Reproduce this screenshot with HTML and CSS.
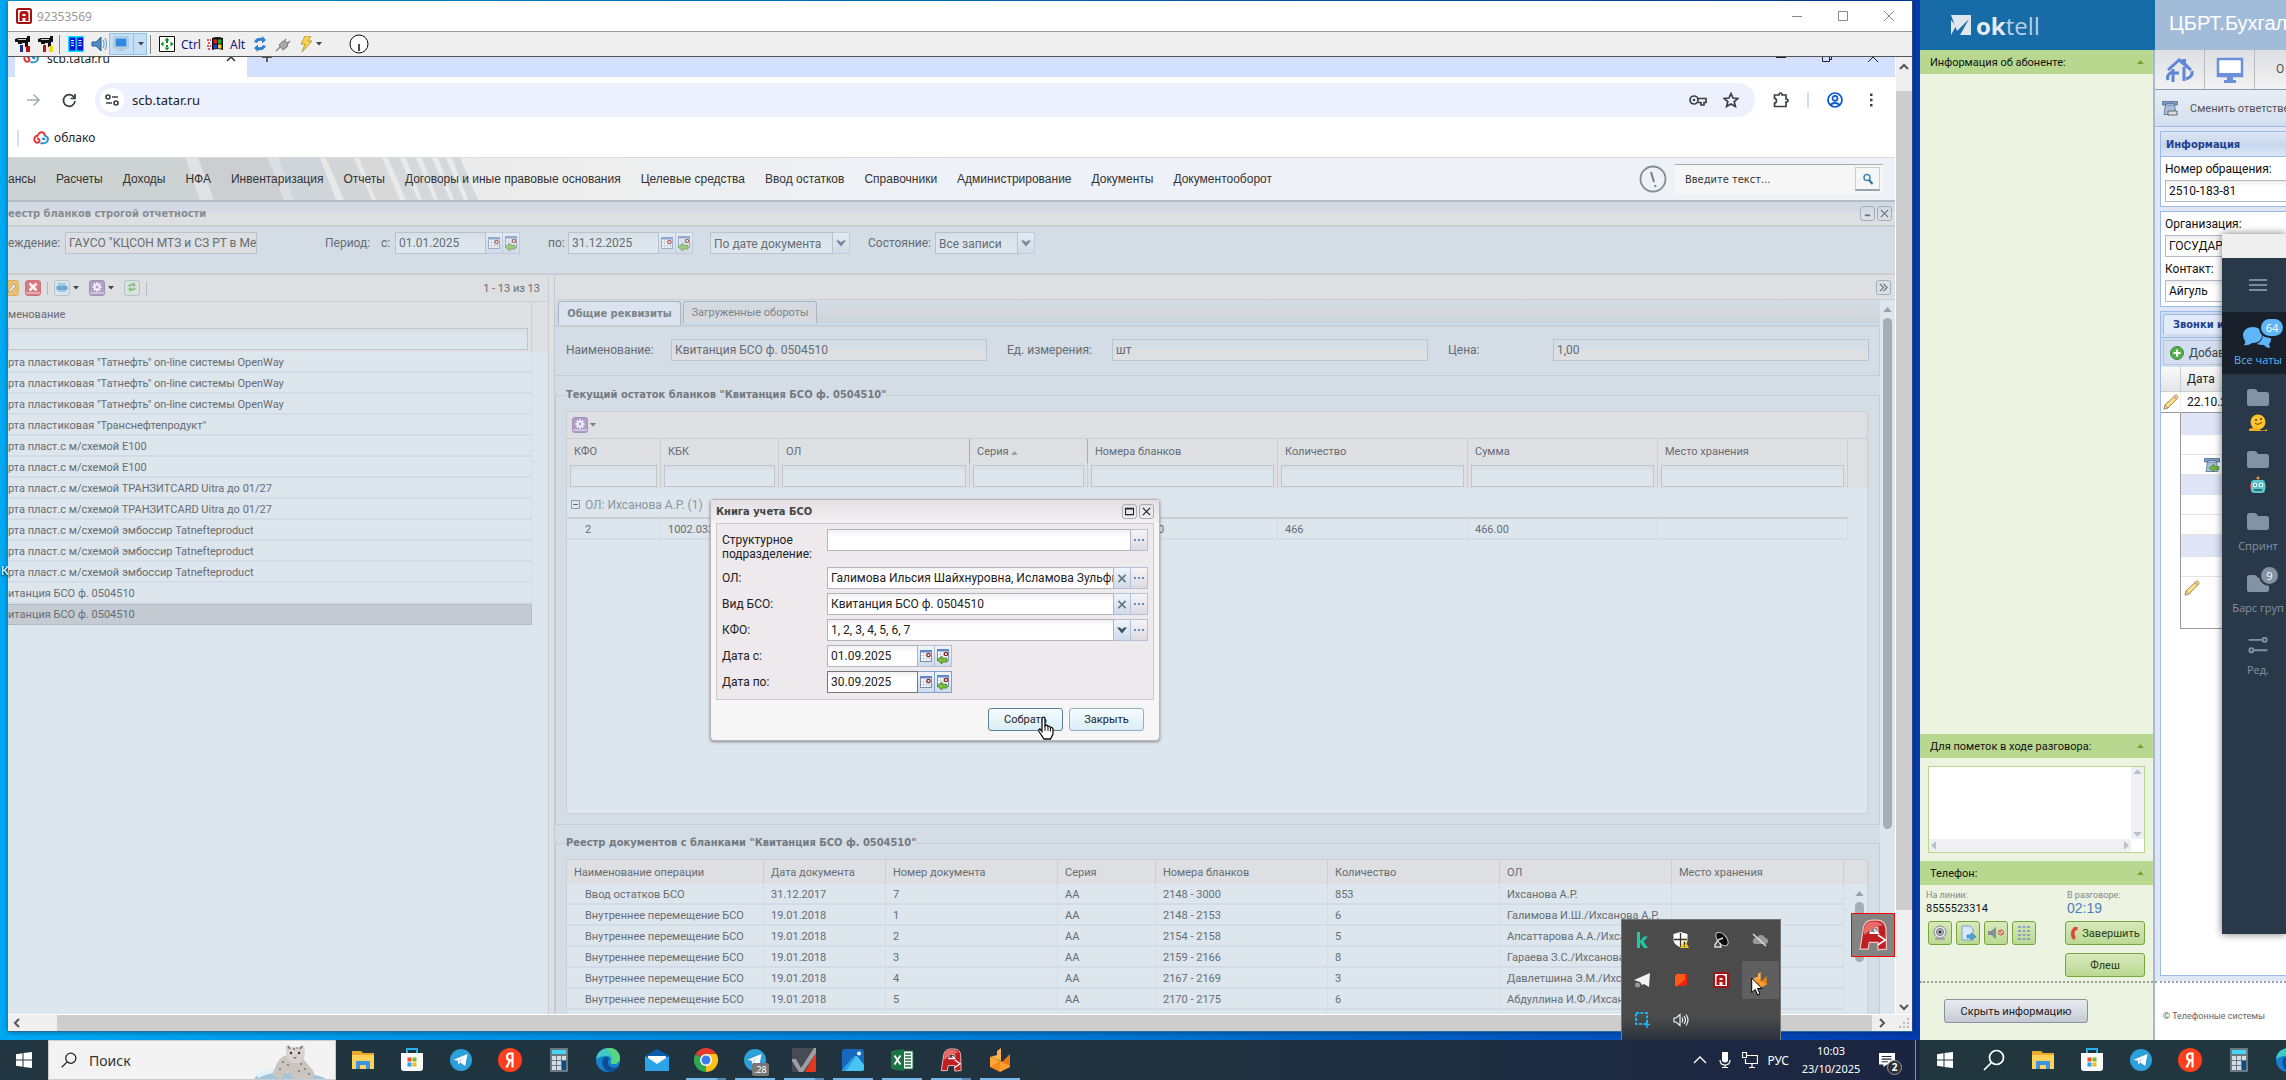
FILE: index.html
```html
<!DOCTYPE html>
<html lang="ru">
<head>
<meta charset="utf-8">
<title>92353569</title>
<link rel="stylesheet" href="styles.css">
</head>
<body>
<svg class="sprite" aria-hidden="true">
  <symbol id="cal" viewBox="0 0 14 16"><rect x="1.500" y="2.500" width="11" height="11" fill="#fff" stroke="#7d8fae"/><path d="M1 2h12v2.500H1z" fill="#6488c4"/><path d="M2 7.500h10M2 10.500h10M4.500 5v8M7.500 5v8M10.500 5v8" stroke="#cdd5e2"/><circle cx="9.500" cy="7" r="1.700" fill="#fff" stroke="#8c1d1d" stroke-width="1.200"/></symbol>
  <symbol id="calback" viewBox="0 0 14 16"><rect x="1.500" y="1.500" width="11" height="11" fill="#fff" stroke="#7d8fae"/><path d="M1 1h12v2.500H1z" fill="#6488c4"/><path d="M2 6.500h10M2 9.500h10M4.500 4v8M7.500 4v8" stroke="#cdd5e2"/><circle cx="10" cy="6" r="1.700" fill="#fff" stroke="#8c1d1d" stroke-width="1.200"/><path d="M1 12l5-4v2.500h5v3.500H6v2z" fill="#7cbf3f" stroke="#3f8420" stroke-width=".8"/></symbol>
  <symbol id="chev" viewBox="0 0 10 8"><path d="M0 1h3l2 2 2-2h3L5 7z" fill="#3c5060"/></symbol>
  <symbol id="dots" viewBox="0 0 10 4"><path d="M0 1h2v2H0zM4 1h2v2H4zM8 1h2v2H8z" fill="#5a8fc0"/></symbol>
  <symbol id="cross" viewBox="0 0 10 10"><path d="M1 1l8 8M9 1l-8 8" stroke="#5d7386" stroke-width="1.700"/></symbol>
  <symbol id="gear" viewBox="0 0 16 16"><rect x=".5" y=".5" width="15" height="15" rx="2.500" fill="#9a7db8" stroke="#8468a6"/><path d="M1 13h14" stroke="#eee5f5"/><g stroke="#fff" stroke-width="2"><path d="M8 2.500v9M3.500 7h9M4.800 3.800l6.400 6.400M11.200 3.800l-6.400 6.400"/></g><circle cx="8" cy="7" r="1.500" fill="#9a7db8"/></symbol>
  <symbol id="down" viewBox="0 0 6 4"><path d="M0 0h6L3 3.500z" fill="#444"/></symbol>
  <symbol id="up" viewBox="0 0 10 6"><path d="M0 6h10L5 0z" fill="#98a1aa"/></symbol>
  <symbol id="upgreen" viewBox="0 0 10 6"><path d="M0 6h10L5 0z" fill="#6fa632"/></symbol>
  <symbol id="cloud" viewBox="0 0 16 14"><g fill="none" stroke-width="2"><path d="M5.500 5C2 4 .500 8 2 10.500c1 1.500 3 1.500 4 .5 1-1.500 0-4-2-3.500" stroke="#e03535"/><path d="M5 4c1-3 5-4 6.500-1 .5 1 .2 1.500 0 2" stroke="#e03535"/><path d="M11.500 5c3 0 4 2.500 3 5s-5 2.500-7 2M9 8q2-1 3 1" stroke="#2a8fd0"/></g></symbol>
  <symbol id="ammyy" viewBox="0 0 16 16"><rect x="1" y="1" width="14" height="14" rx="1.500" fill="#fff" stroke="#a31212" stroke-width="2"/><path d="M3.500 13V6q0-3 3-3h3q3 0 3 3v7h-3v-3h-3v3zM6.500 6v2h3V6z" fill="#b51414" fill-rule="evenodd"/></symbol>
  <symbol id="ammyybig" viewBox="0 0 24 26"><path d="M1.500 24.500L4 8Q5 1.500 11 1h4q7 0 7.500 7l.5 16.500-7 .500v-6H9l-1 5.500zM10 7v4h6V7z" fill="#c01f22" stroke="#f0c3c3" fill-rule="evenodd"/><path d="M4.500 10q0-8 7.500-8 6 0 8 3-8 1-15 8z" fill="#e86b6b"/><path d="M9 11.500h7l-3-3M16 13l6 4-6 4" fill="none" stroke="#fff" stroke-width="1.300"/></symbol>
  <symbol id="telegram" viewBox="0 0 24 24"><circle cx="12" cy="12" r="11" fill="#2ba0da"/><path d="M4.500 11.800L18.500 6l-2.300 12-5-3.500-2 2-.4-3.700z" fill="#fff"/><path d="M9 13l7-5-5 6.500" fill="#c9dfee"/></symbol>
  <symbol id="yandex" viewBox="0 0 24 24"><circle cx="12" cy="12" r="12" fill="#fc3f1d"/><path d="M14.500 19.500V5.500h-2.300c-2 0-3.200 1.100-3.200 3.300s1.200 3.500 3.200 3.500h2.300M12 12.500l-3.500 7" fill="none" stroke="#fff" stroke-width="2.200"/></symbol>
  <symbol id="explorer" viewBox="0 0 24 24"><path d="M1 3h9l2 2h11v16H1z" fill="#e9a92c"/><path d="M1 7h22v14H1z" fill="#ffd35b"/><path d="M5 21v-8h14v8h-4v-4H9v4z" fill="#3b94e0"/></symbol>
  <symbol id="store" viewBox="0 0 24 24"><path d="M7 6V1h10v5" fill="none" stroke="#28b1ea" stroke-width="2"/><path d="M1 5h22v15q0 3-3 3H4q-3 0-3-3z" fill="#f7f9fb"/><path d="M7.500 9.500h4v4h-4z" fill="#f04f24"/><path d="M12.500 9.500h4v4h-4z" fill="#7fba28"/><path d="M7.500 14.500h4v4h-4z" fill="#1da5ea"/><path d="M12.500 14.500h4v4h-4z" fill="#fdb913"/></symbol>
  <symbol id="calc" viewBox="0 0 24 24"><rect x="3" width="18" height="24" rx="1" fill="#6b7983"/><path d="M5 2h14v4H5z" fill="#45d4f5"/><path d="M5 8h4v4H5zM10 8h4v4h-4zM15 8h4v4h-4zM5 13h4v4H5zM10 13h4v4h-4zM5 18h4v4H5zM10 18h4v4h-4z" fill="#d6dde2"/><path d="M15 13h4v9h-4z" fill="#0e4a86"/></symbol>
  <symbol id="edge" viewBox="0 0 24 24"><circle cx="12" cy="12" r="12" fill="#1680cf"/><path d="M0 11C1 3 8 0 13 0c7 0 11 5 11 10 0 4-3 6-6 6-3 0-4-1-3-3 1-3-1-5-5-5-5 0-8 2-10 3z" fill="#3fc9c6"/><path d="M14 0c6 0 10 5 10 10 0 4-3 6-6 6-3 0-4-1-3-3 3-4 1-9-6-12z" fill="#62d86b" opacity=".75"/><path d="M9 9c-5 3-3 13 5 15 4 0 7-3 8-5-5 2-10 0-10-5 0-2 1-3 1-4-1-1-3-1-4-1z" fill="#0f4c94"/></symbol>
  <symbol id="mail" viewBox="0 0 24 24"><path d="M0 8l12-7 12 7v3H0z" fill="#0b5cad"/><path d="M3 8h18v10H3z" fill="#f4f6f8"/><path d="M0 8l12 8 12-8v15H0z" fill="#2aa5ec"/><path d="M3 8h18l-9 6z" fill="#fff"/></symbol>
  <symbol id="chrome" viewBox="0 0 24 24"><path d="M12 12V0l10.400 6A12 12 0 0 1 12 24z" fill="#fbc116"/><path d="M12 12L12 24A12 12 0 0 1 1.600 6z" fill="#2da94f"/><path d="M1.600 6A12 12 0 0 1 22.400 6H12v6z" fill="#e33b2e"/><circle cx="12" cy="12" r="6" fill="#fff"/><circle cx="12" cy="12" r="4.500" fill="#3b7ded"/></symbol>
  <symbol id="check" viewBox="0 0 24 24"><path d="M0 0h24v24H0z" fill="#474b55"/><path d="M24 4v20H13z" fill="#e6361d"/><path d="M0 11h4l5 9L22 0h2v5L11 24H7L0 13z" fill="#9d9fa3"/></symbol>
  <symbol id="photos" viewBox="0 0 24 24"><rect x="1" y="1" width="22" height="22" rx="3" fill="#1769bf"/><path d="M1 23L13 9q2-2 4 0l6 8v4q0 2-2 2z" fill="#49c5f5"/><path d="M1 22l10-12q2-2 3 0L5 23H3z" fill="#2d9dea"/><circle cx="18" cy="5.500" r="2" fill="#fff"/></symbol>
  <symbol id="excel" viewBox="0 0 24 24"><path d="M12 3h11v18H12z" fill="#fff" stroke="#1c7343"/><path d="M15 6h6M15 9h6M15 12h6M15 15h6M15 18h6" stroke="#1c7343" stroke-width="1.500"/><path d="M1 3l13-2v22L1 21z" fill="#1c7343"/><path d="M4.500 7.500l6 9M10.500 7.500l-6 9" stroke="#fff" stroke-width="1.800"/></symbol>
  <symbol id="fox" viewBox="0 0 24 24"><path d="M2 9l10 4v11L2 19z" fill="#f58b1f"/><path d="M12 13l10 3v3l-10 5z" fill="#ff9d2e"/><path d="M2 9l7-2V3l4-3v13z" fill="#ffb04d"/><path d="M14 14l8-8v12z" fill="#e87a10"/><path d="M2 9l10 4-10 6z" fill="#ffa63a"/></symbol>
  <symbol id="win" viewBox="0 0 16 16"><path d="M0 2.200l6.500-.9v6.200H0zM7.500 1.100L16 0v7.500H7.500zM0 8.500h6.500v6.200L0 13.800zM7.500 8.500H16V16l-8.500-1.100z" fill="#fff"/></symbol>
  <symbol id="lens" viewBox="0 0 22 22"><circle cx="13.500" cy="8.500" r="7" fill="none" stroke="currentColor" stroke-width="1.700"/><path d="M8.500 13.500L1 21" stroke="currentColor" stroke-width="1.700"/></symbol>
  <symbol id="pencil" viewBox="0 0 16 16"><path d="M1 15l1-4L12 1.500q1.500-1 2.500.3t-.3 2.700L5 14z" fill="#f8e08a" stroke="#b08a52"/><path d="M1 15l1-4 3 3z" fill="#e9c9a8" stroke="#a9845d" stroke-width=".6"/><path d="M11 2.500l2.700 2.800" stroke="#d49a88" stroke-width="1.500"/></symbol>
  <symbol id="phone" viewBox="0 0 16 16"><path d="M.5 1.500h15V5H12V3.500H4V5H.5z" fill="#7d9cc6" stroke="#4f6c97" stroke-width=".8"/><path d="M3.500 5h9l1.500 9.500H2z" fill="#a9bedb" stroke="#4f6c97" stroke-width=".8"/></symbol>
  <symbol id="folder" viewBox="0 0 22 17"><path d="M0 2.500Q0 0 2.500 0h5q1.500 0 2.500 1.500L11 3h8.500Q22 3 22 5.500v9q0 2.500-2.500 2.500h-17Q0 17 0 14.500z" fill="#8393a3"/></symbol>
  <symbol id="drill" viewBox="0 0 16 16"><path d="M0 3l3-1h9V0h3v6h-2v5h-3V7H7v1H3V6H0z" fill="#111"/><path d="M3 3.500h8" stroke="#ccc"/></symbol>
</svg>

<div class="monitor main-monitor">
  <div class="desktop">
    <span class="peek">К</span>
    <div class="remote">
      <header class="titlebar">
        <svg class="i16"><use href="#ammyy"/></svg>
        <span class="grow">92353569</span>
        <button aria-label="Свернуть"><svg viewBox="0 0 12 12"><path d="M1 6.500h10" /></svg></button>
        <button aria-label="Развернуть"><svg viewBox="0 0 12 12"><path d="M1.500 1.500h9v9h-9z"/></svg></button>
        <button aria-label="Закрыть"><svg viewBox="0 0 12 12"><path d="M1 1l10 10M11 1L1 11"/></svg></button>
      </header>
      <div class="tools">
        <span class="tool"><svg class="i16"><use href="#drill"/><path d="M5 9h3v7H5z" fill="#1c2f8c"/><path d="M11 10h4v6h-4z" fill="#b01212"/></svg></span>
        <span class="tool"><svg class="i16"><use href="#drill"/><path d="M5 9h3v7H5z" fill="#c01212"/><path d="M11 10h4v6h-4z" fill="#f0e000"/></svg></span>
        <i class="bar"></i>
        <span class="tool"><svg class="i16" viewBox="0 0 16 16"><path d="M0 0h16v16H0z" fill="#00e1f5"/><path d="M1.500 1.500h6v13h-6zM9 1.500h6v13H9z" fill="#0617d8"/><path d="M3 4.500h3M3 7h3M3 9.500h3M10.500 4.500h3M10.500 7h3M10.500 9.500h3" stroke="#fff"/></svg></span>
        <span class="tool"><svg class="i16" viewBox="0 0 16 16"><path d="M1 6h4l5-5v14l-5-5H1z" fill="#4f8fc4" stroke="#2d5f92"/><path d="M12 4q2 4 0 8M14 2q3 6 0 12" fill="none" stroke="#7aa8cf" stroke-width="1.300"/></svg></span>
        <span class="tool on"><svg class="i16" viewBox="0 0 16 16"><path d="M1 1h14v11H1z" fill="#cfe3f7" stroke="#9fb6cc"/><path d="M2.500 2.500h11v8h-11z" fill="#2f8be0"/><path d="M6 12h4v2h2v1H4v-1h2z" fill="#b8c2cb"/></svg><i class="divide"></i><svg class="drop"><use href="#down"/></svg></span>
        <i class="bar"></i>
        <span class="tool"><svg class="i16" viewBox="0 0 16 16"><path d="M.5.500h15v15H.5z" fill="#fff" stroke="#111"/><path d="M8 1.500l2.500 3h-5zM8 14.500l2.500-3h-5zM1.500 8l3-2.500v5zM14.500 8l-3-2.500v5zM7 4h2v3H7zM7 9h2v3H7z" fill="#0a8a1c"/></svg></span>
        <span class="tool key">Ctrl</span>
        <span class="tool"><svg class="i16" viewBox="0 0 16 16"><path d="M5 2q5-2 11 0v12q-6-2-11 0z" fill="#111"/><path d="M6.500 3.500h3.500v4H6.500z" fill="#e02020"/><path d="M11 3.500h3.500v4H11z" fill="#20b030"/><path d="M6.500 8.500h3.500v4H6.500z" fill="#2040e0"/><path d="M11 8.500h3.500v4H11z" fill="#f0d020"/><path d="M0 4h4M1 7h3M0 10h4M1 13h3" stroke="#d02030" stroke-width="1.500" stroke-dasharray="2 1"/></svg></span>
        <span class="tool key">Alt</span>
        <span class="tool"><svg class="i16" viewBox="0 0 16 16"><path d="M2 6q2-5 8-4V0l4 4-4 3.500V5Q6 4 5 7z" fill="#2f7fd0"/><path d="M14 10q-2 5-8 4v2l-4-4 4-3.500V11q4 1 5-2z" fill="#2f7fd0"/></svg></span>
        <span class="tool"><svg class="i16" viewBox="0 0 16 16"><path d="M1 15l4-4" stroke="#888" stroke-width="1.500"/><path d="M4 9l4 5 4-3 1-4-5-2z" fill="#aaa" stroke="#777"/><path d="M9 6l2-3M12 8l3-3" stroke="#888" stroke-width="1.500"/></svg></span>
        <span class="tool bolt"><svg class="i16" viewBox="0 0 16 16"><path d="M7 0h6l-3 5h4L4 16l3-8H3z" fill="#fbd34b" stroke="#b08a2a" stroke-width=".8"/></svg><svg class="drop"><use href="#down"/></svg></span>
        <svg class="dial" viewBox="0 0 20 20"><circle cx="10" cy="10" r="9" fill="#fff" stroke="#111"/><path d="M10 10v7" stroke="#111" stroke-width="1.500"/></svg>
      </div>

      <div class="view">
        <div class="screen">
          <div class="tabstrip">
            <div class="tab"><svg class="i16"><use href="#cloud"/></svg><span class="grow">scb.tatar.ru</span><svg class="x10" viewBox="0 0 10 10"><path d="M1 1l8 8M9 1L1 9" stroke="#333" stroke-width="1.500"/></svg></div>
            <svg class="x10 plus" viewBox="0 0 10 10"><path d="M0 5h10M5 0v10" stroke="#333" stroke-width="1.500"/></svg>
            <div class="winbtns"><svg viewBox="0 0 12 12"><path d="M1 6.500h10"/></svg><svg viewBox="0 0 12 12"><path d="M1.500 3.500h7v7h-7zM3.500 3.500v-2h7v7h-2"/></svg><svg viewBox="0 0 12 12"><path d="M1 1l10 10M11 1L1 11"/></svg></div>
          </div>
          <div class="address">
            <svg class="ico" viewBox="0 0 16 16"><path d="M2 8h12M8.500 2.500L14 8l-5.500 5.500" stroke="#a9adb3"/></svg>
            <svg class="ico reload" viewBox="0 0 16 16"><path d="M13.200 5.500A5.800 5.800 0 1 0 14 9M14 2v4.500H9.500" stroke="#3c4043"/></svg>
            <div class="omni">
              <span class="site"><svg viewBox="0 0 14 14"><g fill="none" stroke="#3c4043" stroke-width="1.600"><circle cx="3" cy="4" r="2"/><path d="M7 4h6M1 10h6"/><circle cx="11" cy="10" r="2"/></g></svg></span>
              <input class="url" aria-label="Адрес" value="scb.tatar.ru">
              <svg class="ico keyico" viewBox="0 0 18 16"><circle cx="5" cy="8" r="4" stroke="#3c4043"/><circle cx="5" cy="8" r="1.300" fill="#3c4043"/><path d="M9 6.500h8v4h-2V13h-3v-2.500H9" stroke="#3c4043"/></svg>
              <svg class="ico" viewBox="0 0 16 16"><path d="M8 1.500l2 4.500 5 .4-3.800 3.200 1.200 4.900L8 11.900l-4.400 2.600 1.200-4.900L1 6.400 6 6z" stroke="#3c4043"/></svg>
            </div>
            <svg class="ico ext" viewBox="0 0 16 16"><path d="M1.500 3H6q0-2 1.500-2T9 3h4v4q2 0 2 1.500T13 10v4.500H1.500V11q2 0 2-2.300t-2-2.300z" stroke="#3c4043"/></svg>
            <i class="bluebar"></i>
            <svg class="ico" viewBox="0 0 16 16"><circle cx="8" cy="8" r="7" stroke="#0b57d0"/><circle cx="8" cy="6.300" r="2.500" stroke="#0b57d0"/><path d="M3 13q5-4 10 0" stroke="#0b57d0"/></svg>
            <svg class="ico more" viewBox="0 0 16 16"><path d="M7 1.500h2.500v2.500H7zM7 6.800h2.500v2.500H7zM7 12h2.500v2.500H7z" fill="#3c4043"/></svg>
          </div>
          <div class="bookmarks"><i class="bluebar"></i><svg class="i16"><use href="#cloud"/></svg><a href="#">облако</a></div>
          <nav class="menu">
            <svg class="stripes" viewBox="0 0 490 42" preserveAspectRatio="none"><path d="M0 0h178l14 42H0z" fill="#cdd3d2"/><path d="M178 0h12l16 42h-14z" fill="#dfe1e2"/><path d="M190 0h70l18 42h-72z" fill="#ccced1"/><path d="M260 0h10l16 42h-10z" fill="#dcdfe2"/><path d="M270 0h42l16 42h-42z" fill="#cfd5d9"/><path d="M318 0h28l18 42h-28z" fill="#d3d5d6"/><path d="M351 0h23l18 42h-24z" fill="#d8d8d9"/><path d="M380 0h12l18 42h-12zM398 0h10l18 42h-12zM414 0h10l18 42h-12zM430 0h8l18 42h-10zM444 0h8l18 42h-10z" fill="#d3d8dc"/></svg>
            <a href="#">ансы</a><a href="#">Расчеты</a><a href="#">Доходы</a><a href="#">НФА</a><a href="#">Инвентаризация</a><a href="#">Отчеты</a><a href="#">Договоры и иные правовые основания</a><a href="#">Целевые средства</a><a href="#">Ввод остатков</a><a href="#">Справочники</a><a href="#">Администрирование</a><a href="#">Документы</a><a href="#">Документооборот</a>
            <svg class="alert" viewBox="0 0 28 28"><circle cx="14" cy="14" r="12.500" fill="none" stroke="#858b90" stroke-width="1.800"/><path d="M12 7l3 10M16 20l.7 2" stroke="#777e84" stroke-width="2"/></svg>
            <div class="search"><input aria-label="Поиск" placeholder="Введите текст..."><button aria-label="Найти"><svg viewBox="0 0 12 12"><circle cx="5" cy="4.500" r="3" fill="#fff" stroke="#4186b8" stroke-width="1.500"/><path d="M7 7l3.500 4" stroke="#2f6f9e" stroke-width="2"/></svg></button></div>
          </nav>

          <div class="work">
            <header class="workhead"><h1>еестр бланков строгой отчетности</h1>
              <button class="mini" aria-label="Свернуть"><svg viewBox="0 0 10 10"><path d="M2 7h6" stroke-width="2"/></svg></button>
              <button class="mini" aria-label="Закрыть"><svg viewBox="0 0 10 10"><path d="M1 1l8 8M9 1L1 9"/></svg></button>
            </header>
            <form class="filters">
              <label for="org">еждение:</label><input id="org" class="f-org" value="ГАУСО &quot;КЦСОН МТЗ и СЗ РТ в Ме">
              <span class="period">Период:</span>
              <label for="from">с:</label><span class="combo f-date"><input id="from" value="01.01.2025"><i class="trg"><svg><use href="#cal"/></svg></i><i class="trg"><svg><use href="#calback"/></svg></i></span>
              <label class="f-to" for="to">по:</label><span class="combo f-date"><input id="to" value="31.12.2025"><i class="trg"><svg><use href="#cal"/></svg></i><i class="trg"><svg><use href="#calback"/></svg></i></span>
              <span class="combo f-by"><select aria-label="Сортировка"><option>По дате документа</option></select><i class="trg"><svg class="c"><use href="#chev"/></svg></i></span>
              <label class="f-state" for="st">Состояние:</label><span class="combo f-all"><select id="st"><option>Все записи</option></select><i class="trg"><svg class="c"><use href="#chev"/></svg></i></span>
            </form>
            <div class="cols">
              <aside class="list">
                <div class="ltools">
                  <svg class="i16 half" viewBox="0 0 16 16"><rect x=".5" y=".5" width="15" height="15" rx="2.500" fill="#efb13a" stroke="#d39a30"/><path d="M6 10l5-6 2 2-5 5-3 1z" fill="#fff" stroke="#8a7450" stroke-width=".8"/></svg>
                  <svg class="i16" viewBox="0 0 16 16"><rect x=".5" y=".5" width="15" height="15" rx="2.500" fill="#d6424a" stroke="#bb3b44"/><path d="M1 13h14" stroke="#f7dede"/><path d="M4.500 3.500l7 7M11.500 3.500l-7 7" stroke="#fff" stroke-width="2.500"/></svg>
                  <i class="lbar"></i>
                  <svg class="i16" viewBox="0 0 16 16"><rect x=".5" y=".5" width="15" height="15" rx="2.500" fill="#dbe7ee" stroke="#a3b5c0"/><path d="M4 3h8v3H4z" fill="#7cc0e5"/><path d="M2.500 6h11v4h-11z" fill="#2f8fc6"/><path d="M4 10h8v2H4z" fill="#7cc0e5"/></svg><svg class="drop"><use href="#down"/></svg>
                  <svg class="i16"><use href="#gear"/></svg><svg class="drop"><use href="#down"/></svg>
                  <svg class="i16" viewBox="0 0 16 16"><rect x=".5" y=".5" width="15" height="15" rx="2.500" fill="#d5e3dc" stroke="#9fb3aa"/><path d="M4 6q1-3 5-2.500V2l3 3-3 2V5.500Q6 5 5.500 7zM12 8q-1 3-5 2.500V12L4 9l3-2v1.500q3 .5 3.500-1z" fill="#5dab4b"/></svg>
                  <i class="lbar"></i>
                  <span class="count">1 - 13 из 13</span>
                </div>
                <table class="names">
                  <colgroup><col><col class="pad17"></colgroup>
                  <thead><tr><th>менование</th><th></th></tr><tr class="flt"><td><input aria-label="Фильтр наименования"></td><td></td></tr></thead>
                  <tbody>
                    <tr><td>рта пластиковая "Татнефть" on-line системы OpenWay</td></tr>
                    <tr><td>рта пластиковая "Татнефть" on-line системы OpenWay</td></tr>
                    <tr><td>рта пластиковая "Татнефть" on-line системы OpenWay</td></tr>
                    <tr><td>рта пластиковая "Транснефтепродукт"</td></tr>
                    <tr><td>рта пласт.с м/схемой Е100</td></tr>
                    <tr><td>рта пласт.с м/схемой Е100</td></tr>
                    <tr><td>рта пласт.с м/схемой ТРАНЗИТCARD Uitra до 01/27</td></tr>
                    <tr><td>рта пласт.с м/схемой ТРАНЗИТCARD Uitra до 01/27</td></tr>
                    <tr><td>рта пласт.с м/схемой эмбоссир Tatnefteproduct</td></tr>
                    <tr><td>рта пласт.с м/схемой эмбоссир Tatnefteproduct</td></tr>
                    <tr><td>рта пласт.с м/схемой эмбоссир Tatnefteproduct</td></tr>
                    <tr><td>итанция БСО ф. 0504510</td></tr>
                    <tr class="sel"><td>итанция БСО ф. 0504510</td></tr>
                  </tbody>
                </table>
              </aside>
              <section class="card">
                <div class="cardhead"><button class="mini" aria-label="Развернуть"><svg viewBox="0 0 10 10"><path d="M1 1l4 4-4 4M5 1l4 4-4 4"/></svg></button></div>
                <div class="cardbody">
                  <div class="cardcol">
                    <div class="tabs"><button class="cur">Общие реквизиты</button><button>Загруженные обороты</button></div>
                    <div class="req">
                      <label for="nm">Наименование:</label><input id="nm" value="Квитанция БСО ф. 0504510">
                      <label for="un">Ед. измерения:</label><input id="un" value="шт">
                      <label for="pr">Цена:</label><input id="pr" value="1,00">
                    </div>
                    <fieldset>
                      <legend>Текущий остаток бланков "Квитанция БСО ф. 0504510"</legend>
                      <div class="grid tall">
                        <div class="gtools"><svg class="i16"><use href="#gear"/></svg><svg class="drop"><use href="#down"/></svg></div>
                        <table class="stock">
                          <colgroup><col class="w94"><col class="w118"><col class="w191"><col class="w118"><col class="w190"><col class="w190"><col class="w190"><col class="w190"><col></colgroup>
                          <thead>
                            <tr><th>КФО</th><th>КБК</th><th class="dk">ОЛ</th><th class="dk">Серия <svg class="sort"><use href="#up"/></svg></th><th>Номера бланков</th><th>Количество</th><th>Сумма</th><th>Место хранения</th><th></th></tr>
                            <tr class="flt"><td><input aria-label="КФО"></td><td><input aria-label="КБК"></td><td class="dk"><input aria-label="ОЛ"></td><td class="dk"><input aria-label="Серия"></td><td><input aria-label="Номера"></td><td><input aria-label="Количество"></td><td><input aria-label="Сумма"></td><td><input aria-label="Место"></td><td></td></tr>
                          </thead>
                          <tbody>
                            <tr class="group"><td colspan="8"><svg class="fold" viewBox="0 0 10 10"><path d="M.5.500h9v9h-9z" fill="#dde5ed" stroke="#7f8c97"/><path d="M2.500 5h5" stroke="#4e5a64"/></svg>ОЛ: Ихсанова А.Р. (1)</td><td></td></tr>
                            <tr class="row"><td class="in">2</td><td>1002.033</td><td></td><td></td><td class="tail">0</td><td>466</td><td>466.00</td><td></td><td></td></tr>
                          </tbody>
                        </table>
                      </div>
                    </fieldset>
                    <fieldset class="docsset">
                      <legend>Реестр документов с бланками "Квитанция БСО ф. 0504510"</legend>
                      <div class="grid">
                        <table class="docs">
                          <colgroup><col class="w197"><col class="w122"><col class="w172"><col class="w98"><col class="w172"><col class="w172"><col class="w172"><col class="w172"><col></colgroup>
                          <thead><tr><th>Наименование операции</th><th>Дата документа</th><th>Номер документа</th><th>Серия</th><th>Номера бланков</th><th>Количество</th><th>ОЛ</th><th>Место хранения</th><th></th></tr></thead>
                          <tbody>
                            <tr class="row"><td class="in">Ввод остатков БСО</td><td>31.12.2017</td><td>7</td><td>АА</td><td>2148 - 3000</td><td>853</td><td>Ихсанова А.Р.</td><td></td><td></td></tr>
                            <tr class="row"><td class="in">Внутреннее перемещение БСО</td><td>19.01.2018</td><td>1</td><td>АА</td><td>2148 - 2153</td><td>6</td><td>Галимова И.Ш./Ихсанова А.Р.</td><td></td><td></td></tr>
                            <tr class="row"><td class="in">Внутреннее перемещение БСО</td><td>19.01.2018</td><td>2</td><td>АА</td><td>2154 - 2158</td><td>5</td><td>Апсаттарова А.А./Ихсанова</td><td></td><td></td></tr>
                            <tr class="row"><td class="in">Внутреннее перемещение БСО</td><td>19.01.2018</td><td>3</td><td>АА</td><td>2159 - 2166</td><td>8</td><td>Гараева З.С./Ихсанова</td><td></td><td></td></tr>
                            <tr class="row"><td class="in">Внутреннее перемещение БСО</td><td>19.01.2018</td><td>4</td><td>АА</td><td>2167 - 2169</td><td>3</td><td>Давлетшина Э.М./Ихсанова</td><td></td><td></td></tr>
                            <tr class="row"><td class="in">Внутреннее перемещение БСО</td><td>19.01.2018</td><td>5</td><td>АА</td><td>2170 - 2175</td><td>6</td><td>Абдуллина И.Ф./Ихсанова</td><td></td><td></td></tr>
                            <tr class="row"><td></td><td></td><td></td><td></td><td></td><td></td><td></td><td></td><td></td></tr>
                          </tbody>
                        </table>
                        <div class="innerbar"><svg><use href="#up"/></svg><i></i></div>
                      </div>
                    </fieldset>
                  </div>
                  <div class="cardbar"><svg><use href="#up"/></svg><i></i></div>
                </div>
              </section>
            </div>
          </div>
        </div>
        <div class="vbar"><svg viewBox="0 0 10 10"><path d="M1 7l4-4 4 4"/></svg><i></i><svg viewBox="0 0 10 10"><path d="M1 3l4 4 4-4"/></svg></div>
      </div>
      <div class="hbar"><svg viewBox="0 0 10 10"><path d="M7 1L3 5l4 4"/></svg><i></i><svg viewBox="0 0 10 10"><path d="M3 1l4 4-4 4"/></svg><svg class="grip" viewBox="0 0 10 10"><path d="M8 0h2v2H8zM4 4h2v2H4zM8 4h2v2H8zM0 8h2v2H0zM4 8h2v2H4zM8 8h2v2H8z"/></svg></div>
    </div>
  </div>

  <div class="dialog" role="dialog" aria-label="Книга учета БСО">
    <header><h2>Книга учета БСО</h2>
      <button class="mini" aria-label="Развернуть"><svg viewBox="0 0 10 10"><path d="M.5 1.500h9v7h-9zM1 2h8"/></svg></button>
      <button class="mini" aria-label="Закрыть окно"><svg viewBox="0 0 10 10"><path d="M1 1l8 8M9 1L1 9"/></svg></button>
    </header>
    <form class="dform">
      <div class="frow two"><label for="d1">Структурное подразделение:</label><span class="combo"><input id="d1"><i class="trg g"><svg class="d"><use href="#dots"/></svg></i></span></div>
      <div class="frow"><label for="d2">ОЛ:</label><span class="combo"><input id="d2" value="Галимова Ильсия Шайхнуровна, Исламова Зульфи"><i class="trg"><svg class="c"><use href="#cross"/></svg></i><i class="trg g"><svg class="d"><use href="#dots"/></svg></i></span></div>
      <div class="frow"><label for="d3">Вид БСО:</label><span class="combo"><input id="d3" value="Квитанция БСО ф. 0504510"><i class="trg"><svg class="c"><use href="#cross"/></svg></i><i class="trg g"><svg class="d"><use href="#dots"/></svg></i></span></div>
      <div class="frow"><label for="d4">КФО:</label><span class="combo"><input id="d4" value="1, 2, 3, 4, 5, 6, 7"><i class="trg"><svg class="c"><use href="#chev"/></svg></i><i class="trg g"><svg class="d"><use href="#dots"/></svg></i></span></div>
      <div class="frow"><label for="d5">Дата с:</label><span class="combo date"><input id="d5" value="01.09.2025"><i class="trg"><svg><use href="#cal"/></svg></i><i class="trg"><svg><use href="#calback"/></svg></i></span></div>
      <div class="frow"><label for="d6">Дата по:</label><span class="combo date focus"><input id="d6" value="30.09.2025"><i class="trg"><svg><use href="#cal"/></svg></i><i class="trg"><svg><use href="#calback"/></svg></i></span></div>
    </form>
    <footer><button class="hot">Собрать</button><button>Закрыть</button></footer>
    <svg class="hand" viewBox="0 0 18 24"><path d="M5.500 1.500q1.500-1 2.500.5v8l1-1q1.500 0 2 1.500 1.500-1 2.500 1 2-.5 2.500 1.500v5L13.500 23H7L2 15.500q-1-2 1-2.500l2 2.500V2z" fill="#fff" stroke="#111" stroke-width="1.300"/><path d="M11 11v4M13.500 12v3.500M8 10v5" stroke="#111"/></svg>
  </div>

  <div class="float"><svg viewBox="0 0 24 26"><use href="#ammyybig"/></svg></div>

  <div class="tray-popup">
    <span><svg viewBox="0 0 16 16"><path d="M3 0h3v9l4-4.500h4L9.500 9.500 14 16h-4l-4-5.500V16H3z" fill="#1fc8a0"/></svg></span>
    <span><svg viewBox="0 0 16 16"><path d="M7.500 0l7 2v6q0 4-7 7.500Q.5 12 .5 8V2z" fill="#fff"/><path d="M7.500 1v14M1 7.500h13" stroke="#333" stroke-width="1.300"/><path d="M11.500 7.500L16 16H7z" fill="#f5c518"/><path d="M11.500 10v3M11.500 14v1" stroke="#222"/></svg></span>
    <span><svg viewBox="0 0 16 16"><ellipse cx="9" cy="7" rx="4.500" ry="8" fill="#0a0a0a" stroke="#ccc" transform="rotate(-40 9 7)"/><path d="M5 8l-3 5v2h6l-1-4M5 8l5-2" fill="none" stroke="#ddd" stroke-width="1.500"/></svg></span>
    <span><svg viewBox="0 0 16 16"><path d="M3 12q-3-1-2-4t4-2q1-3 4-3t4 3q3 0 3 3t-3 3z" fill="#9a9a9a"/><path d="M1 2l13 12" stroke="#ddd" stroke-width="1.500"/></svg></span>
    <span><svg viewBox="0 0 16 16"><path d="M0 8L16 1l-1 14-5-3-2 1-2-3z" fill="#f2f2f2"/><circle cx="3.500" cy="13" r="2.500" fill="#999"/></svg></span>
    <span><svg viewBox="0 0 16 16"><path d="M2 4l2-2h10v10l-2 2H2z" fill="#f0200d"/><path d="M2 4l2-2h8v6l-8 6H2z" fill="#ff5a14"/></svg></span>
    <span><svg viewBox="0 0 16 16"><use href="#ammyy"/></svg></span>
    <span class="hov"><svg viewBox="0 0 24 24"><use href="#fox"/></svg></span>
    <span><svg viewBox="0 0 16 16"><path d="M2 1h11v11H2z" fill="none" stroke="#18b4f5" stroke-width="2" stroke-dasharray="3 1.500"/><path d="M13 9v7M9.500 12.500h7" stroke="#18b4f5" stroke-width="1.500"/></svg></span>
    <span><svg viewBox="0 0 16 16"><path d="M1 6h2l4-3.500v11L3 10H1zM9 5.500q1.500 2.500 0 5M11 4q3 4 0 8M13 2.500q4 5.500 0 11" fill="none" stroke="#eee" stroke-width="1.200"/></svg></span>
    <svg class="arrow" viewBox="0 0 12 19"><path d="M.7 1v14.500l3.500-3 2.500 5.500 2.300-1-2.500-5.500h4.500z" fill="#fff" stroke="#000"/></svg>
  </div>

  <div class="taskbar">
    <button class="start" aria-label="Пуск"><svg class="i16"><use href="#win"/></svg></button>
    <label class="tsearch"><svg class="lens"><use href="#lens"/></svg><input aria-label="Поиск" placeholder="Поиск">
      <svg class="leopard" viewBox="0 0 82 40"><path d="M0 40q4-12 16-12l40 4q16 2 20 8z" fill="#9fc6dc"/><path d="M4 34q20-12 56 0" fill="none" stroke="#e4f1f8" stroke-width="5"/><path d="M22 26q3-11 12-13l12-1 11 13q8 8 1 13H45q-8-3-10-9l-7 8-9-4z" fill="#cbc5c0"/><path d="M33 3l4 2h9l5-2 1 6-1 8-5 4h-6l-6-4-1-8z" fill="#d8d3ce"/><path d="M35 4l2 3M49 4l-2 3" stroke="#77706b" stroke-width="1.500"/><circle cx="38" cy="11" r="1.200" fill="#333"/><circle cx="46" cy="11" r="1.200" fill="#333"/><path d="M40 15h4l-2 2z" fill="#8c5f5a"/><g fill="#7b756f"><circle cx="30" cy="20" r="1"/><circle cx="35" cy="23" r="1"/><circle cx="48" cy="22" r="1"/><circle cx="52" cy="27" r="1"/><circle cx="46" cy="29" r="1"/><circle cx="27" cy="27" r="1"/><circle cx="56" cy="32" r="1"/><circle cx="41" cy="7" r="1"/><circle cx="44" cy="6" r=".8"/></g></svg>
    </label>
    <div class="apps">
      <span><svg><use href="#explorer"/></svg></span><span><svg><use href="#store"/></svg></span><span><svg><use href="#telegram"/></svg></span><span><svg><use href="#yandex"/></svg></span><span><svg><use href="#calc"/></svg></span><span><svg><use href="#edge"/></svg></span><span><svg><use href="#mail"/></svg></span><span class="run multi"><svg><use href="#chrome"/></svg></span><span class="run"><svg><use href="#telegram"/></svg><b>.28</b></span><span class="run multi"><svg><use href="#check"/></svg></span><span class="run"><svg><use href="#photos"/></svg></span><span class="run"><svg><use href="#excel"/></svg></span><span class="run multi"><svg><use href="#ammyybig"/></svg></span><span class="run"><svg><use href="#fox"/></svg></span>
    </div>
    <div class="systray">
      <svg viewBox="0 0 16 16"><path d="M2 11l6-6 6 6" fill="none" stroke="#fff" stroke-width="1.300"/></svg>
      <svg viewBox="0 0 16 16"><path d="M5 0h6v9q-3 3-6 0z" fill="#fff"/><path d="M3 8q0 5 5 5t5-5M8 13v3M5 15.500h6" fill="none" stroke="#fff" stroke-width="1.200"/></svg>
      <svg viewBox="0 0 16 16"><path d="M5 3.500h10.500v8H3.500V7M.5.500h4v5h-4zM7 15.500h6M10 12v3" fill="none" stroke="#fff" stroke-width="1.200"/></svg>
      <span>РУС</span>
      <time><span>10:03</span><span>23/10/2025</span></time>
      <span class="note"><svg viewBox="0 0 18 16"><path d="M0 0h18v13H9l-4 3v-3H0z" fill="#fff"/><path d="M3 4h11M3 7h11M3 10h7" stroke="#20303c" stroke-width="1.200"/></svg><b>2</b></span>
    </div>
  </div>
</div>

<div class="monitor side-monitor">
  <div class="split">
    <div class="oktell">
      <div class="logo"><svg viewBox="0 0 90 22"><path d="M0 1h20v20H9L18 5 6 17z" fill="#dfe7ee"/><path d="M0 6l5 6-5 9z" fill="#dfe7ee"/></svg><b>ok</b><span>tell</span></div>
      <div class="okbody">
        <h3>Информация об абоненте:<svg><use href="#upgreen"/></svg></h3>
        <div class="grow"></div>
        <h3><label for="notes">Для пометок в ходе разговора:</label><svg><use href="#upgreen"/></svg></h3>
        <div class="notes"><textarea id="notes"></textarea><i class="nv"><svg><use href="#up"/></svg><svg class="flip"><use href="#up"/></svg></i><i class="nh"><svg viewBox="0 0 6 10"><path d="M6 0v10L0 5z"/></svg><svg viewBox="0 0 6 10"><path d="M0 0v10l6-5z"/></svg></i></div>
        <h3>Телефон:<svg><use href="#upgreen"/></svg></h3>
        <div class="call">
          <div class="lines"><small>На линии:</small><span>8555523314</span></div>
          <div class="lines talk"><small>В разговоре:</small><span>02:19</span></div>
          <div class="squares">
            <button aria-label="Камера"><svg viewBox="0 0 16 16"><circle cx="8" cy="7" r="6" fill="#e8e8ea" stroke="#8a8a90"/><circle cx="8" cy="7" r="3.500" fill="#b9bdc6" stroke="#777"/><circle cx="8" cy="7" r="1.500" fill="#25304a"/><path d="M3 13h10v2H3z" fill="#a5a5aa"/></svg></button>
            <button aria-label="Перевод"><svg viewBox="0 0 16 16"><path d="M2 1h8l3 3v11H2z" fill="#d7e9f8" stroke="#7ea2c4"/><path d="M7 10h4V8l5 3.500-5 3.500v-2H7z" fill="#4da3e0" stroke="#2d78b0" stroke-width=".6"/></svg></button>
            <button aria-label="Без звука"><svg viewBox="0 0 16 16"><path d="M0 6h3l5-4v12l-5-4H0z" fill="#8a8f94"/><circle cx="13" cy="7.500" r="2.500" fill="#f3d5c8" stroke="#c8433a"/><path d="M11.500 6l3 3" stroke="#c8433a"/></svg></button>
            <button aria-label="Клавиатура"><svg viewBox="0 0 16 16"><path d="M2 1h3v2H2zM6.500 1h3v2h-3zM11 1h3v2h-3zM2 5h3v2H2zM6.500 5h3v2h-3zM11 5h3v2h-3zM2 9h3v2H2zM6.500 9h3v2h-3zM11 9h3v2h-3zM2 13h3v2H2zM6.500 13h3v2h-3zM11 13h3v2h-3z" fill="#8fa2ba"/></svg></button>
          </div>
          <button class="wide"><svg viewBox="0 0 8 13"><path d="M7.500 0v3l-2 .5q-2 3 0 6L5 12.500H3Q-2 6 4 0z" fill="#e0453c"/></svg>Завершить</button>
          <i></i>
          <button class="wide">Флеш</button>
        </div>
        <div class="hide"><button>Скрыть информацию</button></div>
      </div>
    </div>
    <div class="crm">
      <div class="crmtitle">ЦБРТ.Бухгал</div>
      <div class="crmnav">
        <a href="#" aria-label="Домой"><svg viewBox="0 0 28 26"><path d="M1 12L13 1l3 2V2h4v4l6 6-2 2-11-9L3 14z" fill="#5f86d6"/><path d="M7 12v13M7 16h6M18 10v14M2 23q-2-5 4-8M26 14q1 6-6 8" fill="none" stroke="#5f86d6" stroke-width="3"/></svg></a>
        <a href="#" aria-label="Монитор"><svg viewBox="0 0 28 26"><path d="M2 2h24v17H2z" fill="#fff" stroke="#6c90da" stroke-width="2.500"/><path d="M2 16h24v4H2zM11 20h6v3h3v3H8v-3h3z" fill="#6c90da"/></svg></a>
        <span>О</span>
      </div>
      <div class="crmtools"><svg class="i16"><use href="#phone"/><path d="M6 11h9v4H6z" fill="#ddd" stroke="#666"/></svg><span>Сменить ответстве</span></div>
      <div class="crmbody">
        <section class="box">
          <h4>Информация</h4>
          <div class="flds"><label for="c1">Номер обращения:</label><input id="c1" value="2510-183-81"></div>
        </section>
        <section class="box flds2">
          <label for="c2">Организация:</label><input id="c2" value="ГОСУДАРС">
          <label for="c3">Контакт:</label><input id="c3" value="Айгуль">
        </section>
        <section class="box callbox">
          <div class="ctabs"><button>Звонки и</button></div>
          <div class="cadd"><button><svg viewBox="0 0 14 14"><circle cx="7" cy="7" r="6.500" fill="#55b04b" stroke="#3d8a38"/><path d="M7 3.500v7M3.500 7h7" stroke="#fff" stroke-width="2"/></svg>Добави</button></div>
          <table class="calls"><thead><tr><th></th><th>Дата</th></tr></thead><tbody><tr><td><svg class="i16"><use href="#pencil"/></svg></td><td>22.10.2</td></tr></tbody></table>
          <div class="nest"><i class="b h22"></i><i class="l"></i><i class="l"><svg class="i16"><use href="#phone"/><path d="M5 11l5-4v2.500h5v3h-5V15z" fill="#6dbb3d" stroke="#3f8420" stroke-width=".6"/></svg></i><i class="b"></i><i class="l"></i><i class="l"></i><i class="b h22"></i><i class="l"></i><i class="e"><svg class="i16"><use href="#pencil"/></svg></i></div>
        </section>
      </div>
      <div class="crmfoot">© Телефонные системы</div>
    </div>
  </div>
  <div class="chat">
    <div class="chattop"></div>
    <div class="burger"><i></i><i></i><i></i></div>
    <a class="cur" href="#"><svg viewBox="0 0 30 26"><path d="M10 3c6 0 9 4 9 8.500S15 19 10 19l-1 .1Q6 22 1 21q2-2 1-4Q0 14 0 11 1 3 10 3z" fill="#5eb5f7"/><path d="M20 10c5 0 8 2 8 5q0 3-2 5l1 4q-4 0-6-3-5 0-7-1 6-3 6-10z" fill="#5eb5f7"/></svg><span>Все чаты</span><b>64</b></a>
    <a href="#"><svg class="fd"><use href="#folder"/></svg><svg class="emo" viewBox="0 0 18 18"><circle cx="9" cy="8" r="7.500" fill="#fcc42d"/><path d="M0 15q6-3 10 0t8 0v2H0z" fill="#f5ab22"/><circle cx="7" cy="6" r="1" fill="#5a3610"/><circle cx="12" cy="5" r="1" fill="#5a3610"/><path d="M6 9q3 3 7-1" fill="none" stroke="#5a3610"/></svg></a>
    <a href="#"><svg class="fd"><use href="#folder"/></svg><svg class="emo" viewBox="0 0 18 18"><circle cx="9" cy="2" r="1.500" fill="#eda322"/><rect x="2" y="4" width="14" height="13" rx="3" fill="#5fc5cc"/><path d="M1 8h1v5H1zM16 8h1v5h-1z" fill="#c44"/><circle cx="6" cy="9" r="2.300" fill="#e8fbff"/><circle cx="12" cy="9" r="2.300" fill="#e8fbff"/><circle cx="6" cy="9" r="1" fill="#27768a"/><circle cx="12" cy="9" r="1" fill="#27768a"/><path d="M5 14h8" stroke="#1b5562" stroke-width="1.500"/></svg></a>
    <a href="#"><svg class="fd"><use href="#folder"/></svg><span>Спринт</span></a>
    <a href="#"><svg class="fd"><use href="#folder"/></svg><span>Барс груп</span><b class="g">9</b></a>
    <a href="#"><svg class="fd" viewBox="0 0 22 18"><g fill="none" stroke="#8393a3" stroke-width="2"><path d="M1 3h14M7 14h14"/><circle cx="18" cy="3" r="2.200"/><circle cx="4" cy="14" r="2.200"/></g></svg><span>Ред.</span></a>
  </div>
  <div class="taskbar two">
    <span><svg><use href="#win"/></svg></span><span><svg><use href="#lens"/></svg></span><span><svg><use href="#explorer"/></svg></span><span><svg><use href="#store"/></svg></span><span><svg><use href="#telegram"/></svg></span><span><svg><use href="#yandex"/></svg></span><span><svg><use href="#calc"/></svg></span><span><svg><use href="#edge"/></svg></span>
  </div>
</div>
</body>
</html>
```
FILE: styles.css
```css
* { box-sizing: border-box; }
body { margin: 0; height: 100vh; display: flex; overflow: hidden; font: 12px Roboto, "Noto Sans", sans-serif; color: #222; }
button, input, select, textarea { font: inherit; color: inherit; margin: 0; padding: 0; border: 0; background: none; border-radius: 0; outline: 0; min-width: 0; }
select { appearance: none; }
a { color: inherit; text-decoration: none; }
h1, h2, h3, h4 { margin: 0; font-size: 11px; }
h1, h2, h4, legend, .tabs .cur, .ctabs button { font-family: "DejaVu Sans Condensed", sans-serif; }
i { font-style: normal; }
svg { display: block; flex: none; }
table { border-spacing: 0; table-layout: fixed; width: 100%; }
th, td { padding: 0; font-weight: normal; text-align: left; white-space: nowrap; overflow: hidden; }
.sprite { position: absolute; width: 0; height: 0; }
.i16 { width: 16px; height: 16px; }
.drop { width: 6px; height: 4px; }
.grow { flex: 1; }
.monitor { position: relative; display: flex; flex-direction: column; min-width: 0; }
.main-monitor { flex: 1; }
.side-monitor { flex: 0 0 366px; overflow: hidden; }

/* remote control window */
.desktop { position: relative; flex: 1; min-height: 0; padding: 1px 7px 8px 8px; background: linear-gradient(90deg, #00a8f2, #0078d0 55%, #043cb0); display: flex; }
.peek { position: absolute; left: 1px; top: 564px; color: #fff; width: 7px; overflow: hidden; text-shadow: 0 1px 2px #000; }
.remote { flex: 1; min-width: 0; display: flex; flex-direction: column; background: #fff; border-right: 1px solid #2a4a8a; border-bottom: 1px solid #2d6a94; box-shadow: 0 0 5px #0006; }
.titlebar { height: 31px; display: flex; align-items: center; gap: 5px; padding: 0 3px 0 8px; border-bottom: 1px solid #999; color: #999; font: 12px "Noto Sans", sans-serif; }
.titlebar button { width: 41px; height: 30px; display: grid; place-items: center; }
.titlebar svg:not(.i16) { width: 12px; height: 12px; fill: none; stroke: #888; }
.tools { height: 25px; display: flex; align-items: center; background: #efefef; border-bottom: 1px solid #555; padding-left: 4px; gap: 2px; }
.tool { display: flex; align-items: center; justify-content: center; width: 21px; height: 22px; }
.tool.on { width: 38px; margin-left: -2px; background: #c2dff5; border: 1px solid #90c3ea; gap: 4px; }
.tool .divide { width: 1px; height: 100%; background: #90c3ea; }
.tool.key { color: #17177c; width: auto; padding: 0 2px; font: 12px "Noto Sans", sans-serif; }
.tool.bolt { width: 30px; gap: 2px; }
.bar { width: 1px; height: 19px; margin: 0 3px 0 1px; background: #888; }
.dial { width: 20px; height: 20px; margin-left: 22px; }
.view { flex: 1; min-height: 0; display: flex; }
.screen { flex: 1; min-width: 0; display: flex; flex-direction: column; overflow: hidden; }
.vbar { width: 17px; background: #efefef; border-left: 1px solid #fff; display: flex; flex-direction: column; align-items: center; }
.vbar svg, .hbar svg { width: 10px; height: 10px; fill: none; stroke: #555; stroke-width: 2; }
.vbar svg { margin: 5px 0 19px; }
.vbar svg:last-child { margin: 92px 0 2px; }
.vbar i { flex: 1; align-self: stretch; background: #cdcdcd; }
.hbar { height: 17px; display: flex; align-items: center; background: #efefef; border-top: 1px solid #fff; padding: 0 3px 0 4px; }
.hbar i { flex: 1; align-self: stretch; background: #cdcdcd; margin: 0 5px 0 35px; }
.hbar .grip { fill: #bbb; stroke: none; margin-left: 12px; }

/* browser chrome */
.tabstrip { height: 20px; background: #d3e1ff; display: flex; align-items: flex-start; overflow: hidden; }
.tab { width: 232px; height: 20px; margin-left: 7px; background: #fff; display: flex; align-items: flex-start; gap: 8px; padding: 0 11px 0 8px; font: 12px "Noto Sans", sans-serif; }
.tab .i16 { margin-top: -8px; }
.tab .grow { margin-top: -5px; line-height: 14px; }
.x10 { width: 10px; height: 10px; margin-top: -5px; }
.plus { margin-left: 15px; }
.winbtns { margin: -6px 16px 0 auto; display: flex; gap: 34px; }
.winbtns svg { width: 12px; height: 12px; fill: none; stroke: #222; }
.address { height: 41px; background: #fff; display: flex; align-items: center; padding: 4px 16px 0 17px; border-radius: 0 6px 0 0; }
.ico { width: 16px; height: 16px; fill: none; stroke-width: 1.7; }
.keyico { width: 18px; }
.reload { margin-left: 20px; }
.omni { flex: 1; height: 34px; margin: 0 18px 0 18px; border-radius: 17px; background: #edf1fe; display: flex; align-items: center; gap: 16px; padding: 0 16px 0 5px; }
.site { width: 24px; height: 24px; border-radius: 50%; background: #fff; display: grid; place-items: center; }
.site svg { width: 14px; height: 14px; }
.url { flex: 1; font: 13px "Noto Sans", sans-serif; margin-left: -8px; }
.bluebar { width: 2px; height: 16px; background: #cfdefc; margin: 0 18px; }
.more { margin-left: 20px; }
.bookmarks { height: 39px; display: flex; align-items: center; font: 12px "Noto Sans", sans-serif; background: #fff; gap: 5px; }
.bookmarks .bluebar { margin: 0 9px; }
.menu { position: relative; height: 45px; display: flex; align-items: center; gap: 20px; font: 12px "Liberation Sans", Arial, sans-serif; color: #333; border-top: 1px solid #dcdcdc; border-bottom: 2px solid #b3bccb; background: linear-gradient(90deg, #e0e0e0, #ededed 30%, #eef1f7 50%); white-space: nowrap; padding: 0 12px 1px 0; overflow: hidden; }
.menu a { position: relative; }
.stripes { position: absolute; left: 0; top: 0; width: 490px; height: 42px; }
.alert { width: 28px; height: 28px; margin-left: auto; margin-right: -12px; }
.search { width: 208px; height: 30px; display: flex; align-items: center; background: #f6f6f6; border-top: 1px solid #aaa; font: 11px "DejaVu Sans Condensed", sans-serif; padding: 0 3px 0 10px; }
.search input { flex: 1; }
.search input::placeholder { color: #333; }
.search button { width: 25px; height: 24px; border: 1px solid #ccc; border-bottom: 2px solid #9aa3b5; display: grid; place-items: center; }
.search button svg { width: 12px; height: 12px; }

/* registry page under the mask */
.work { flex: 1; min-height: 0; display: flex; flex-direction: column; color: #666d73; background: #d4dce6; }
.workhead { height: 25px; display: flex; align-items: center; gap: 2px; padding-right: 3px; background: linear-gradient(#d2d8df, #d4dbe5 45%, #dddfe3 50%); border-bottom: 2px solid #c9cfd2; }
.workhead h1 { flex: 1; color: #868c91; }
.mini { width: 15px; height: 15px; border: 1px solid #9fb0bd; border-radius: 3px; display: grid; place-items: center; }
.mini svg { width: 9px; height: 9px; fill: none; stroke: #66757f; stroke-width: 1.3; }
.filters { height: 48px; border-bottom: 2px solid #c9cfd2; display: flex; align-items: flex-start; padding-top: 5px; line-height: 22px; white-space: nowrap; }
.filters input, .filters select { height: 22px; border: 1px solid #b9c3cb; background: linear-gradient(#d5dfe5, #dde6ed 40%); padding-left: 3px; }
.filters .f-org { width: 192px; margin-left: 7px; background: #dddfe3; }
.filters label[for="org"] { width: 50px; }
.period { margin-left: 68px; width: 56px; }
.filters label[for="from"] { width: 14px; }
.combo { display: flex; }
.combo input, .combo select { flex: 1; width: 0; height: 22px; }
.trg { width: 17px; height: 22px; border: 1px solid #b3c0d6; border-left: 0; background: linear-gradient(#eef4fa, #cfdbea); display: grid; place-items: center; }
.trg svg { width: 14px; height: 16px; }
.trg .c { width: 10px; height: 9px; }
.trg .d { width: 10px; height: 4px; }
.filters .trg { opacity: .6; }
.f-date { width: 125px; }
.f-to { width: 20px; margin-left: 28px; }
.f-by { width: 140px; margin-left: 17px; }
.f-state { margin-left: 18px; width: 67px; }
.f-all { width: 100px; }
.cols { flex: 1; min-height: 0; display: flex; }
.list { width: 541px; background: #dde5ed; border-right: 1px solid #c9cfd2; font-size: 11px; overflow: hidden; }
.ltools { height: 27px; display: flex; align-items: center; background: #dddfe3; border-bottom: 1px solid #c9cfd2; padding: 0 8px 0 0; gap: 6px; }
.ltools svg:not(.drop), .gtools svg { opacity: .65; }
.ltools .drop { margin: 0 4px 0 -3px; }
.ltools .half { margin-left: -5px; }
.ltools .lbar { width: 1px; height: 13px; background: #b3babf; }
.count { margin-left: auto; }
.names .pad17 { width: 16px; }
.names th { height: 25px; background: #dddfe3; }
.names th:first-child, .names .flt td:first-child { border-right: 1px solid #c9cfd2; }
.names .flt td { height: 25px; background: #dddfe3; vertical-align: top; padding: 1px 3px 0 0; }
.flt input { display: block; width: 100%; height: 22px; border: 1px solid #c0c6ca; background: linear-gradient(#d5dfe5, #dde6ed 30%); }
.names tbody td { height: 21px; line-height: 17px; border: 1px solid #d3dbe6; border-top-color: #e0e7ee; border-left: 0; border-bottom-width: 2px; }
.names .sel td { background: #c4cbd3; border: 1px dotted #a3acb5; border-left: 0; }
.card { flex: 1; min-width: 0; display: flex; flex-direction: column; margin-left: 5px; border-left: 1px solid #c3c9d0; box-shadow: -5px 0 #dddfe3; overflow: hidden; }
.cardhead { height: 25px; background: #dddfe3; border-bottom: 1px solid #c9cfd2; display: flex; justify-content: flex-end; align-items: center; padding-right: 4px; flex: none; }
.cardbody { flex: 1; min-height: 0; display: flex; }
.cardcol { flex: 1; min-width: 0; overflow: hidden; }
.cardbar, .innerbar { width: 15px; background: #dde5ed; display: flex; flex-direction: column; align-items: center; }
.cardbar svg, .innerbar svg { width: 9px; height: 5px; margin: 7px 0 6px; }
.cardbar i { width: 9px; height: 511px; border-radius: 5px; background: #a6aeb5; }
.tabs { height: 27px; display: flex; gap: 2px; padding: 1px 0 0 3px; background: linear-gradient(#d4dce6, #d4d8dd 50%, #cbd3dc); border-bottom: 2px solid #c9d0d2; box-shadow: inset 0 -2px #c8dcee; font-size: 11px; }
.tabs button { height: 22px; border: 1px solid #a9b5c2; border-bottom: 0; border-radius: 3px 3px 0 0; width: 134px; background: linear-gradient(#d4dae2, #d7dade); color: #7c8389; }
.tabs .cur { width: 123px; height: 24px; font-weight: bold; background: #dbe4ee; }
.req { height: 49px; border: 1px solid #c3ccd8; border-width: 0 1px 1px 0; display: grid; grid-template-columns: 105px 1fr 20px 105px 1fr 20px 105px 1fr; padding: 12px 10px 0 11px; line-height: 22px; }
.req label:nth-of-type(2) { grid-column: 4; }
.req label:nth-of-type(3) { grid-column: 7; }
.req input { height: 22px; border: 1px solid #b9c4d2; background: linear-gradient(#d5dde7 45%, #dddfe3 50%); padding-left: 3px; }
fieldset { margin: 12px 0 0; padding: 9px 11px 10px 10px; border: 1px solid #c3ccd8; min-width: 0; }
legend { padding: 0; height: 14px; line-height: 14px; font-size: 11px; font-weight: bold; color: #73797e; }
.docsset { height: 400px; margin-top: 11px; }
.grid { position: relative; border: 1px solid #c9cfd2; background: #dde5ed; font-size: 11px; }
.grid.tall { height: 403px; }
.gtools { height: 27px; background: #dddfe3; border-bottom: 1px solid #c9cfd2; display: flex; align-items: center; gap: 2px; padding-left: 5px; }
.w94 { width: 94px; } .w118 { width: 118px; } .w191 { width: 191px; } .w190 { width: 190px; }
.w197 { width: 197px; } .w122 { width: 122px; } .w172 { width: 172px; } .w98 { width: 98px; }
.grid th { height: 24px; padding-left: 7px; background: #dddfe3; border-right: 1px solid #cacfd3; }
.grid .flt td { height: 25px; background: #dddfe3; border-right: 1px solid #cacfd3; padding: 0 3px; }
.grid .dk { border-right-color: #a5acb1; }
.grid th:last-child, .grid .flt td:last-child { border-right: 0; }
.sort { display: inline-block; width: 7px; height: 4px; }
.group td { height: 31px; border-bottom: 2px solid #c9cfd2; color: #8b96a0; padding: 4px 0 0 4px; font-size: 12px; }
.group td:last-child { border: 0; }
.fold { display: inline-block; width: 9px; height: 9px; margin-right: 5px; }
.grid .row td { height: 21px; line-height: 17px; padding-left: 7px; border: 1px solid #d3dbe6; border-left: 0; border-top-color: #e0e7ee; border-bottom-width: 2px; }
.grid .row td:last-child { border: 0; }
.grid .row .in { padding-left: 18px; }
.grid .row .tail { padding-left: 70px; }
.innerbar { position: absolute; right: 0; top: 24px; bottom: 0; }
.innerbar i { width: 9px; height: 60px; border-radius: 5px; background: #a6aeb5; }

/* report dialog */
.dialog { position: absolute; left: 710px; top: 499px; width: 450px; padding: 0 5px 9px; background: #f6f6f7; border: 1px solid #b9b5bb; border-radius: 4px; box-shadow: 0 1px 3px #0006; color: #222; }
.dialog header { height: 23px; display: flex; align-items: center; gap: 2px; margin: 0 -5px; padding: 0 5px; background: linear-gradient(#e3dfe3, #f3f1f3); }
.dialog h2 { flex: 1; color: #444; }
.dialog .mini svg { stroke: #222; }
.dform { border: 1px solid #cac8cc; background: #eee9ed; padding: 5px 5px 6px; display: flex; flex-direction: column; gap: 4px; }
.frow { display: grid; grid-template-columns: 105px 1fr; line-height: 22px; }
.two { height: 34px; }
.two label { line-height: 14px; padding-top: 4px; width: 90px; }
.dform input { border: 1px solid #b6b4bb; background: linear-gradient(#f0f0f2, #fff 30%); padding-left: 3px; }
.trg.g { background: linear-gradient(#f7f4f7, #ddd9e2); }
.date { width: 125px; }
.focus input { border-color: #777; }
.focus .trg { border-color: #7fa3cf; }
.dialog footer { display: flex; justify-content: flex-end; gap: 6px; padding: 8px 10px 0 0; font-size: 11px; }
.dialog footer button { width: 75px; height: 23px; border: 1px solid #96aec0; border-radius: 3px; background: linear-gradient(#f6fdff, #d9edf6); }
.dialog footer .hot { border-color: #5b7f96; }
.hand { position: absolute; left: 326px; top: 216px; width: 18px; height: 24px; }
.float { position: absolute; left: 1851px; top: 913px; width: 44px; height: 44px; background: #838383; border: 1px solid #f00; display: grid; place-items: center; }
.float svg { width: 32px; height: 32px; }
.tray-popup { position: absolute; right: 139px; bottom: 40px; width: 160px; height: 121px; background: linear-gradient(#4b4b4b 80%, #2c333d); border: 1px solid #777; border-bottom: 0; display: grid; grid-template-columns: repeat(4, 1fr); grid-auto-rows: 40px; }
.tray-popup span { display: grid; place-items: center; }
.tray-popup span svg { width: 16px; height: 16px; }
.tray-popup .hov { background: #5f5f5f; margin: 1px; }
.tray-popup .arrow { position: absolute; left: 129px; top: 57px; width: 12px; height: 19px; }

/* taskbars */
.taskbar { height: 40px; flex: none; display: flex; background: linear-gradient(90deg, #213640, #20333e 55%, #1b2542); color: #fff; font: 12px "Noto Sans", sans-serif; }
.start { width: 48px; display: grid; place-items: center; }
.tsearch { position: relative; width: 288px; background: #f3f3f3; border: 1px solid #ccc; display: flex; align-items: center; gap: 12px; padding-left: 12px; color: #222; overflow: hidden; }
.tsearch input { width: 150px; font-size: 14px; }
.tsearch input::placeholder { color: #333; opacity: 1; }
.lens { width: 16px; height: 16px; }
.leopard { position: absolute; right: 0; top: 1px; width: 82px; height: 40px; }
.apps { display: flex; padding-left: 2px; }
.apps span { position: relative; width: 49px; height: 40px; display: grid; place-items: center; }
.apps svg { width: 24px; height: 24px; }
.apps .run::after { content: ""; position: absolute; left: 5px; bottom: 0; width: 40px; height: 2px; background: #76b9ed; }
.apps .multi::after { background: linear-gradient(90deg, #76b9ed 31px, #5788b0 31px); }
.apps b { position: absolute; left: 22px; top: 23px; padding: 0 2px; height: 13px; border-radius: 2px; background: #777; color: #fff; font-size: 9px; font-weight: normal; line-height: 13px; }
.systray { margin-left: auto; display: flex; align-items: center; gap: 9px; padding-right: 25px; position: relative; }
.systray svg { width: 16px; height: 16px; }
.systray::after { content: ""; position: absolute; right: 4px; top: 0; width: 1px; height: 40px; background: #8a90a0; }
.systray time { width: 66px; display: flex; flex-direction: column; align-items: center; line-height: 18px; font-size: 11px; }
.note { position: relative; margin-left: 6px; }
.note b { position: absolute; left: 8px; top: 8px; width: 15px; height: 15px; border-radius: 50%; background: #2c2f36; border: 1px solid #999; font-size: 10px; line-height: 13px; text-align: center; }
.two.taskbar { background: #21363f; }
.two.taskbar span { flex: none; width: 49px; display: grid; place-items: center; }
.two.taskbar svg { width: 24px; height: 24px; }
.two.taskbar span:first-child svg { width: 16px; height: 16px; }
.two.taskbar span:nth-child(2) svg { width: 22px; height: 22px; }

/* operator panel */
.split { flex: 1; min-height: 0; display: flex; }
.oktell { width: 235px; flex: none; display: flex; flex-direction: column; font-size: 11px; }
.logo { height: 50px; background: #176ba7; display: flex; align-items: center; padding-left: 31px; font: 24px "Open Sans", sans-serif; color: #b9cfe2; }
.logo svg { width: 90px; height: 22px; margin-right: -65px; }
.logo b { color: #e4ebf2; }
.okbody { flex: 1; display: flex; flex-direction: column; background: #ecf3e0; border-right: 2px solid #a7b8d8; }
.okbody h3 { height: 24px; background: #b8d88f; display: flex; align-items: center; justify-content: space-between; padding: 0 9px 0 10px; font-weight: normal; color: #111; }
.okbody h3 svg { width: 7px; height: 4px; }
.notes { margin: 8px; height: 87px; background: #fff; border: 1px solid #b5d78a; display: grid; grid-template: 1fr 13px / 1fr 13px; }
.notes textarea { resize: none; }
.notes i { background: #efeff4; display: flex; justify-content: space-between; align-items: center; padding: 2px; }
.notes svg { width: 9px; height: 5px; opacity: .6; }
.notes .nv { flex-direction: column; }
.notes .nh svg { width: 5px; height: 9px; fill: #98a1aa; }
.flip { transform: rotate(180deg); }
.call { height: 96px; padding: 4px 8px 0; display: grid; grid-template-columns: 137px 80px; grid-template-rows: 32px 24px 32px; }
.call .wide:last-child { margin-top: 8px; }
.lines { display: flex; flex-direction: column; margin-left: -2px; line-height: 13px; color: #111; }
.lines small { font-size: 9px; color: #888; }
.talk { margin-left: 2px; }
.talk span { font: 14px/13px "Liberation Sans", sans-serif; color: #4a82bd; }
.squares { display: flex; gap: 4px; }
.call button { height: 24px; border: 1px solid #74a63c; border-radius: 3px; background: linear-gradient(#d8e8bd, #b9da90); color: #2c3d1c; display: flex; align-items: center; justify-content: center; gap: 4px; }
.squares button { width: 24px; }
.squares svg { width: 16px; height: 16px; }
.wide svg { width: 8px; height: 13px; }
.hide { height: 59px; border-top: 2px dotted #9a9f9a; padding: 16px 24px 0; }
.hide button { width: 144px; height: 24px; border: 1px solid #8a919f; border-radius: 3px; background: linear-gradient(#e9ebf0, #c5cad3); color: #222; }
.crm { flex: 1; min-width: 0; display: flex; flex-direction: column; overflow: hidden; white-space: nowrap; background: #dfe6f6; }
.crmtitle { height: 50px; background: #a2bbd8; color: #fff; font: 20px/46px "Liberation Sans", Arial, sans-serif; padding-left: 14px; }
.crmnav { height: 40px; display: flex; background: linear-gradient(#dddfe3, #f2f2f3); border-bottom: 1px solid #8a9bb8; color: #555; line-height: 38px; }
.crmnav a { flex: none; width: 50px; border-right: 1px solid #bbb; display: grid; place-items: center; }
.crmnav a svg { width: 28px; height: 26px; }
.crmnav span { margin-left: 21px; }
.crmtools { height: 37px; display: flex; align-items: center; gap: 12px; padding-left: 7px; font-size: 11px; color: #555; background: linear-gradient(#e8edf4, #d3dfef); border-bottom: 1px solid #9db9e6; }
.crmbody { flex: 1; margin: 0 0 5px 5px; padding-top: 4px; display: flex; flex-direction: column; gap: 4px; }
.box { border: 1px solid #9db9e6; border-right: 0; background: #fff; width: 200px; }
.box h4 { height: 25px; line-height: 25px; padding-left: 5px; color: #1f3f8f; background: linear-gradient(#dfe7f4, #c9d7ef 50%, #dbe5f5); border-bottom: 1px solid #9db9e6; }
.flds, .flds2 { display: flex; flex-direction: column; padding: 0 0 4px 4px; color: #111; }
.box label { line-height: 24px; height: 23px; }
.box input { height: 22px; border: 1px solid #b5b8c8; background: linear-gradient(#eee, #fff 30%); padding-left: 3px; }
.callbox { flex: 1; }
.ctabs { height: 26px; padding: 2px 0 0 2px; background: #cfdcf2; border-bottom: 1px solid #9db9e6; }
.ctabs button { height: 20px; width: 150px; text-align: left; font-size: 11px; font-weight: bold; color: #1f3f8f; background: #e2ebfa; border: 1px solid #9db9e6; border-bottom: 0; border-radius: 3px 0 0 0; padding-left: 9px; }
.cadd { height: 29px; padding: 2px; background: #d3dff0; }
.cadd button { height: 25px; width: 150px; display: flex; align-items: center; gap: 5px; padding-left: 6px; border: 1px solid #b5c4da; color: #444; }
.cadd svg { width: 14px; height: 14px; }
.calls th:first-child, .calls td:first-child { width: 20px; }
.calls th { height: 25px; background: linear-gradient(#f9f9f9, #e4e5e7); border: 1px solid #ccc; border-width: 0 1px 1px 0; padding-left: 6px; }
.calls td { height: 21px; padding-left: 6px; border-right: 1px solid #eee; border-bottom: 1px solid #999; color: #111; }
.calls td:first-child { padding-left: 2px; }
.nest { margin-left: 19px; border: 1px solid #999; border-top: 0; display: flex; flex-direction: column; height: 216px; }
.nest i { height: 20px; }
.nest .b { background: #dfe5f5; }
.nest .h22 { height: 22px; }
.nest .l { border-bottom: 1px solid #e3e3e3; padding: 2px 23px; }
.nest .e { padding: 3px; }
.crmfoot { height: 59px; background: #fff; border-top: 2px dotted #9a9fa9; padding: 28px 0 0 8px; font-size: 9px; color: #666; }

/* messenger */
.chat { position: absolute; right: 0; top: 234px; width: 64px; height: 700px; background: #29394a; box-shadow: 0 0 8px #0008; font: 11px "Open Sans", sans-serif; color: #8393a3; white-space: nowrap; }
.chattop { height: 24px; background: #efefef; }
.burger { height: 54px; padding: 21px 0 0 27px; }
.burger i { display: block; width: 18px; height: 2px; margin-bottom: 3px; background: #7d8b99; }
.chat a { position: relative; height: 62px; display: flex; flex-direction: column; align-items: center; padding: 15px 0 0 8px; gap: 8px; overflow: hidden; }
.chat a.cur { background: #17202b; color: #5eb5f7; padding: 12px 0 0 8px; gap: 2px; }
.chat .cur svg { width: 30px; height: 26px; }
.fd { width: 22px; height: 17px; }
.emo { width: 18px; height: 18px; }
.chat b { position: absolute; left: 39px; top: 7px; width: 22px; height: 17px; border-radius: 9px; background: #5eb5f7; color: #fff; font-weight: normal; line-height: 17px; text-align: center; box-shadow: 0 0 0 2px #17202b; }
.chat b.g { width: 17px; background: #8393a3; box-shadow: 0 0 0 2px #29394a; }
```
